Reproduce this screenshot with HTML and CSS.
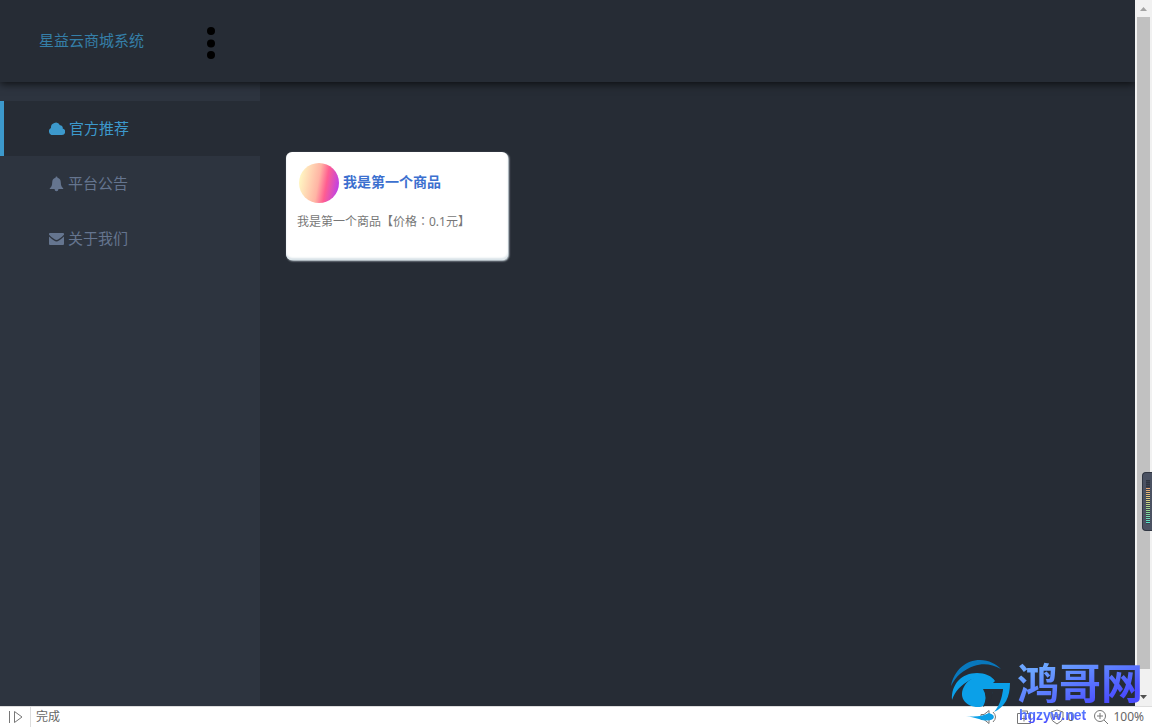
FILE: index.html
```html
<!DOCTYPE html>
<html lang="zh-CN">
<head>
<meta charset="utf-8">
<title>星益云商城系统</title>
<link rel="stylesheet" href="styles.css">
</head>
<body>
<div class="window">
  <div class="viewport">
    <div class="page">
      <header class="topbar">
        <a class="brand" href="#">星益云商城系统</a>
        <button class="menu" type="button" aria-label="菜单">
          <svg width="10" height="34" viewBox="0 0 10 34"><circle cx="5" cy="5" r="4"/><circle cx="5" cy="17.500" r="4"/><circle cx="5" cy="29" r="4"/></svg>
        </button>
      </header>
      <div class="body">
        <nav class="sidebar">
          <a class="item active" href="#">
            <svg width="16" height="14" viewBox="0 0 16 14"><path d="M3.700 13A3.700 3.700 0 0 1 2 6 4.800 4.800 0 0 1 11 3.200 2.700 2.700 0 0 1 13.700 6.500 3.300 3.300 0 0 1 13 13Z"/></svg>
            <span>官方推荐</span>
          </a>
          <a class="item" href="#">
            <svg width="15" height="16" viewBox="0 0 15 16"><path d="M7.500 0.500Q8.500 0.500 8.500 1.700C11 2.300 11.700 4 11.800 6.500 11.900 9.500 12.500 11 14.200 12.200V13H9.500Q9.300 15.300 7.500 15.300 5.700 15.300 5.500 13H.800V12.200C2.500 11 3.100 9.500 3.200 6.500 3.300 4 4 2.300 6.500 1.700Q6.500.500 7.500.500Z"/></svg>
            <span>平台公告</span>
          </a>
          <a class="item" href="#">
            <svg width="15" height="14" viewBox="0 0 15 14"><path d="M0 1.800Q0 1 1 1H14Q15 1 15 1.800V2.700Q13 5 9.500 7.200 7.500 8.700 5.500 7.200 2 5 0 2.700ZM0 4.500Q2 6.500 5 8.500 7.500 10.300 10 8.500 13 6.500 15 4.500V12Q15 13 14 13H1Q0 13 0 12Z"/></svg>
            <span>关于我们</span>
          </a>
        </nav>
        <main class="content">
          <a class="card" href="#">
            <span class="card-head"><i class="avatar"></i><strong>我是第一个商品</strong></span>
            <span class="desc" lang="zh-TW">我是第一个商品【价格：0.1元】</span>
          </a>
        </main>
      </div>
    </div>
    <div class="scrollbar">
      <svg width="17" height="17" viewBox="0 0 17 17"><path d="M8.500 7 12 11H5Z" fill="#a3a3a3"/></svg>
      <div class="track"><div class="thumb"></div></div>
      <svg width="17" height="17" viewBox="0 0 17 17"><path d="M8.500 10 12 6H5Z" fill="#505050"/></svg>
    </div>
  </div>
  <footer class="status">
    <svg class="play" width="14" height="14" viewBox="0 0 14 14"><path d="M.500 1V13M5.500 1.500V12.500L13 7Z"/></svg>
    <span class="state">完成</span>
    <div class="tools">
      <svg width="18" height="16" viewBox="0 0 18 16"><path d="M1 5.500H4L9 1.500V14.500L4 10.500H1ZM11 5.500Q13 8 11 10.500M13 3Q18 8 13 13"/></svg>
      <svg width="14" height="14" viewBox="0 0 14 14"><path d="M3.500 3V1H10.500V3M.500 3.500H13.500V13.500H.500ZM7 5.500V11.500M4 8.500H10"/></svg>
      <span class="blocked"><svg width="14" height="16" viewBox="0 0 14 16"><path d="M7 1 13 3V8Q13 12 7 15 1 12 1 8V3ZM4 5V10M4 7.500H7M7 5V10M9 5V10Q12 7.500 9 5"/></svg>0</span>
      <span class="zoom"><svg width="16" height="16" viewBox="0 0 16 16"><circle cx="7" cy="7" r="5.500"/><path d="M11 11 15 15M7 4V10M4 7H10"/></svg>100%</span>
    </div>
  </footer>
  <div class="meter"><i></i></div>
  <div class="watermark">
    <svg width="64" height="64" viewBox="0 0 64 64">
      <path d="M2 28C5 12 17 2 31 2 40 2 47 6 52 11 43 6 34 5 25 8 14 12 7 18 2 28Z" fill="#0878bd"/>
      <path d="M3 42C2 26 13 15 28 15 36 15 43 18 46 23 38 19 29 18 21 22 12 27 6 33 3 42Z" fill="#0ba0e8"/>
      <path d="M46 23C37 15 22 18 16 27 8 39 17 50 31 49 36 48 40 44 42 38L45 31H54C53 41 50 48 45 54 56 49 61 39 61 25H44Z" fill="#0ba0e8"/>
      <path d="M34 31H54L53 34H44Q42 45 34 49 39 39 34 31Z" fill="#262c35"/>
      <path d="M17 58Q30 60 40 55 47 57 44 61 38 64 30 61 23 59 17 58Z" fill="#0ba0e8"/>
    </svg>
    <div class="words"><span class="name">鸿哥网</span><span class="domain">hgzyw.net</span></div>
  </div>
</div>
</body>
</html>
```
FILE: styles.css
```css
* { box-sizing: border-box; }
body {
  margin: 0;
  font-family: "Noto Sans", "Noto Sans CJK SC", sans-serif;
  font-size: 15px;
}
a { color: inherit; text-decoration: none; }
svg { display: block; flex: none; }
.window {
  position: relative;
  display: flex;
  flex-direction: column;
  height: 100vh;
  overflow: hidden;
}
.viewport { flex: 1; display: flex; min-height: 0; }
.page {
  flex: 1;
  display: flex;
  flex-direction: column;
  background: #262c35;
  overflow: hidden;
}
.topbar {
  position: relative;
  display: flex;
  align-items: center;
  height: 82px;
  padding-left: 39px;
  background: #262c35;
  box-shadow: 0 2px 8px #000000b0;
}
.brand { width: 167px; padding-bottom: 2px; color: #357fa8; line-height: 22px; }
.menu { padding: 4px 0 0; border: 0; background: none; }
.body { flex: 1; display: flex; }
.sidebar { width: 260px; padding-top: 19px; background: #2d343f; }
.item {
  display: flex;
  align-items: center;
  gap: 4px;
  height: 55px;
  padding-left: 45px;
  border-left: 4px solid transparent;
  color: #65758f;
  fill: currentColor;
}
.item span { padding-bottom: 2px; }
.item.active { border-color: #3c99cc; background: #262c35; color: #3c99cc; }
.content { flex: 1; padding: 70px 26px; }
.card {
  display: flex;
  flex-direction: column;
  gap: 9px;
  width: 222px;
  height: 108px;
  padding: 11px;
  border-radius: 6px;
  background: #fff;
  box-shadow: 1px 1px 2px #dde8ee, inset 0 -2px 2px #d9e3e8;
}
.card-head { display: flex; align-items: center; gap: 4px; padding-left: 2px; color: #3c70cf; font-size: 14px; }
.card-head strong { padding-bottom: 4px; }
.avatar {
  width: 40px;
  height: 40px;
  border-radius: 50%;
  background: linear-gradient(100deg, #fffac4 5%, #ffb4a4 48%, #ff5e91 66%, #b23cf5 98%);
}
.desc {
  color: #777;
  font-family: "Noto Sans", "Noto Sans CJK TC", sans-serif;
  font-size: 12px;
  line-height: 20px;
  white-space: nowrap;
}
.scrollbar { display: flex; flex-direction: column; width: 17px; background: #f1f1f1; }
.track { flex: 1; padding: 0 2px; }
.thumb { height: 97%; background: #c1c1c1; }
.status {
  display: flex;
  align-items: center;
  height: 22px;
  padding: 0 8px 1px 9px;
  background: #fff;
  border-top: 1px solid #ddd;
  color: #666;
  font-size: 12px;
  line-height: 20px;
}
.status svg { fill: none; stroke: #777; }
.state { margin-left: 7px; padding-left: 5px; border-left: 1px solid #ddd; }
.tools { display: flex; align-items: center; gap: 19px; margin-left: auto; }
.blocked, .zoom { display: flex; align-items: center; gap: 4px; }
.meter {
  position: absolute;
  right: 0;
  top: 472px;
  width: 10px;
  height: 59px;
  padding: 7px 2px 6px 3px;
  border: 1px solid #303642;
  border-right: 0;
  border-radius: 4px 0 0 4px;
  background: #4b5262;
}
.meter i {
  display: block;
  height: 100%;
  background: repeating-linear-gradient(#0000 0 1px, #3b414e 1px 2px), linear-gradient(#303642 15%, #e8a070 16%, #dcd080 45%, #8fd98f 70%, #50e0d0);
}
.watermark {
  position: absolute;
  right: 9px;
  bottom: 6px;
  display: flex;
  gap: 4px;
  height: 64px;
}
.words { display: flex; flex-direction: column; font-weight: 700; color: transparent; }
.name {
  font-size: 42px;
  line-height: 48px;
  padding-top: 1px;
  background: linear-gradient(160deg, #6ba5ff 20%, #4a4dff 80%);
  background-clip: text;
}
.domain {
  padding-left: 2px;
  font-family: "Liberation Sans", sans-serif;
  font-size: 14px;
  line-height: 16px;
  background: linear-gradient(#5b8cff, #4a4dff);
  background-clip: text;
}
```
